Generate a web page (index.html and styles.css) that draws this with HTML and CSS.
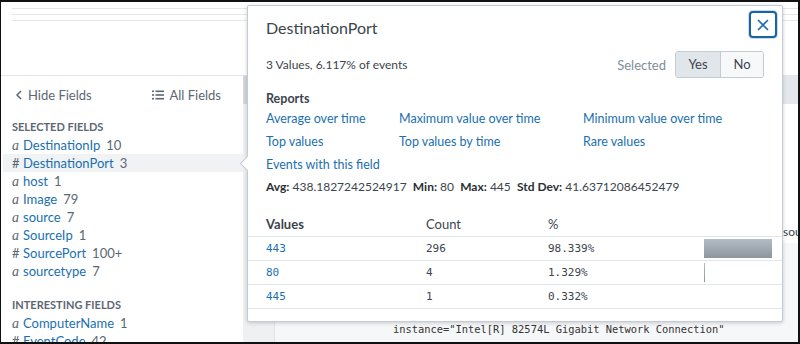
FILE: index.html
```html
<!DOCTYPE html>
<html lang="en">
<head>
    <meta charset="UTF-8">
    <title>Search - Fields</title>
    <link rel="stylesheet" href="styles.css">
</head>
<body>
    <div class="frame">
        <div class="timeline">
            <div class="timeline-line"></div>
            <div class="timeline-line"></div>
            <div class="timeline-line"></div>
        </div>

        <div class="workspace">
            <aside class="sidebar">
                <div class="sidebar-inner">
                    <div class="sidebar-head">
                        <a class="side-link">
                            <svg width="6" height="10" viewBox="0 0 6 10"><polyline points="5,1 1,5 5,9" fill="none" stroke="#5c6773" stroke-width="1.5"/></svg>
                            Hide Fields
                        </a>
                        <a class="side-link">
                            <svg width="12" height="10" viewBox="0 0 12 10">
                                <rect x="0" y="0.5" width="2" height="1.6" fill="#5c6773"/>
                                <rect x="3.5" y="0.5" width="8.5" height="1.6" fill="#5c6773"/>
                                <rect x="0" y="4.2" width="2" height="1.6" fill="#5c6773"/>
                                <rect x="3.5" y="4.2" width="8.5" height="1.6" fill="#5c6773"/>
                                <rect x="0" y="7.9" width="2" height="1.6" fill="#5c6773"/>
                                <rect x="3.5" y="7.9" width="8.5" height="1.6" fill="#5c6773"/>
                            </svg>
                            All Fields
                        </a>
                    </div>

                    <h4 class="field-group">Selected Fields</h4>
                    <ul class="field-list">
                        <li><i class="type">a</i><span class="name">DestinationIp</span><span class="count">10</span></li>
                        <li class="active"><span class="type hash">#</span><span class="name">DestinationPort</span><span class="count">3</span></li>
                        <li><i class="type">a</i><span class="name">host</span><span class="count">1</span></li>
                        <li><i class="type">a</i><span class="name">Image</span><span class="count">79</span></li>
                        <li><i class="type">a</i><span class="name">source</span><span class="count">7</span></li>
                        <li><i class="type">a</i><span class="name">SourceIp</span><span class="count">1</span></li>
                        <li><span class="type hash">#</span><span class="name">SourcePort</span><span class="count">100+</span></li>
                        <li><i class="type">a</i><span class="name">sourcetype</span><span class="count">7</span></li>
                    </ul>

                    <h4 class="field-group interesting">Interesting Fields</h4>
                    <ul class="field-list">
                        <li><i class="type">a</i><span class="name">ComputerName</span><span class="count">1</span></li>
                        <li><span class="type hash">#</span><span class="name">EventCode</span><span class="count">42</span></li>
                    </ul>
                </div>
                <div class="scrollbar"><div class="scroll-thumb"></div></div>
            </aside>

            <main class="events">
                <div class="events-head"></div>
                <div class="event">
                    <div class="event-gutter"></div>
                    <div class="event-body">
                        <div class="event-meta">source = WinEventLog:Microsoft-Windows-Sysmon/Operational</div>
                    </div>
                </div>
                <div class="event alt">
                    <div class="event-gutter"></div>
                    <div class="event-body">
                        <div class="raw">instance="Intel[R] 82574L Gigabit Network Connection"</div>
                    </div>
                </div>
            </main>
        </div>

        <div class="popover">
            <div class="pop-head">
                <h2 class="pop-title">DestinationPort</h2>
                <button class="close-btn" aria-label="Close">
                    <svg width="12" height="12" viewBox="0 0 12 12"><path d="M1 1 L11 11 M11 1 L1 11" stroke="#1a6fb0" stroke-width="1.7" fill="none"/></svg>
                </button>
            </div>

            <div class="pop-summary">
                <span class="summary-text">3 Values, 6.117% of events</span>
                <div class="selected">
                    <span class="selected-label">Selected</span>
                    <div class="toggle">
                        <span class="toggle-btn on">Yes</span>
                        <span class="toggle-btn">No</span>
                    </div>
                </div>
            </div>

            <h3 class="reports-title">Reports</h3>
            <div class="reports">
                <a>Average over time</a>
                <a>Maximum value over time</a>
                <a>Minimum value over time</a>
                <a>Top values</a>
                <a>Top values by time</a>
                <a>Rare values</a>
                <a>Events with this field</a>
            </div>

            <p class="stats">
                <b>Avg:</b> 438.1827242524917 &nbsp;<b>Min:</b> 80 &nbsp;<b>Max:</b> 445 &nbsp;<b>Std Dev:</b> 41.63712086452479
            </p>

            <table class="values">
                <thead>
                    <tr><th class="col-value">Values</th><th class="col-count">Count</th><th class="col-pct">%</th><th></th></tr>
                </thead>
                <tbody>
                    <tr><td class="val">443</td><td>296</td><td>98.339%</td><td><div class="bar" style="width: 68px"></div></td></tr>
                    <tr><td class="val">80</td><td>4</td><td>1.329%</td><td><div class="bar" style="width: 1px"></div></td></tr>
                    <tr><td class="val">445</td><td>1</td><td>0.332%</td><td></td></tr>
                </tbody>
            </table>
        </div>
    </div>
</body>
</html>
```

FILE: styles.css
```css
* {
    margin: 0;
    padding: 0;
    box-sizing: border-box;
}

body {
    font-family: 'Lato', 'Liberation Sans', sans-serif;
    font-size: 13px;
    color: #3c444d;
    background: #111;
}

.frame {
    position: relative;
    width: 800px;
    height: 344px;
    overflow: hidden;
    background: #fff;
    border-top: 2px solid #111;
    border-left: 1px solid #111;
    border-right: 2px solid #111;
    border-bottom: 2px solid #111;
}

/* bande du haut (timeline) */
.timeline {
    height: 73px;
    padding: 1px 0 0 11px;
}

.timeline-line {
    height: 6px;
    border-bottom: 1px solid #e4e7ea;
}

.workspace {
    display: grid;
    grid-template-columns: 246px 1fr;
    height: 267px;
    border-top: 1px solid #e1e6eb;
}

/* sidebar */
.sidebar {
    display: flex;
    overflow: hidden;
}

.sidebar-inner {
    flex: 1;
    padding-left: 2px;
}

.scrollbar {
    width: 4px;
    background: #eef0f2;
}

.scroll-thumb {
    height: 28px;
    background: #d3d8dd;
}

.sidebar-head {
    display: flex;
    justify-content: space-between;
    padding: 10px 22px 0 13px;
    line-height: 18px;
}

.side-link {
    color: #5c6773;
    display: flex;
    align-items: center;
    gap: 6px;
}

.side-link svg {
    flex: none;
}

.sidebar-head .side-link:last-child {
    gap: 5px;
}

.field-group {
    margin-top: 14px;
    padding-left: 9px;
    font-size: 11px;
    line-height: 18px;
    font-weight: 700;
    text-transform: uppercase;
    color: #5c6773;
}

.field-group.interesting {
    margin-top: 16px;
}

.field-list {
    list-style: none;
}

.field-list li {
    display: flex;
    align-items: baseline;
    height: 18px;
    line-height: 18px;
    padding-left: 9px;
    white-space: nowrap;
}

.field-list li.active {
    background: #f0f2f4;
}

.type {
    width: 11px;
    color: #5c6773;
    font-family: 'Liberation Serif', serif;
    font-size: 14px;
}

.type.hash {
    font-family: 'Lato', sans-serif;
    font-size: 13px;
}

.name {
    color: #1a6fb0;
    margin-right: 6px;
}

.count {
    color: #5c6773;
}

/* zone des evenements derriere la popover */
.events {
    background: #fff;
    overflow: hidden;
}

.events-head {
    height: 28px;
    background: #e4e8ec;
}

.event {
    display: flex;
    height: 139px;
}

.event.alt {
    height: 120px;
    background: #f6f7f9;
}

.event-gutter {
    flex: none;
    width: 28px;
    background: #eef0f2;
    border-right: 1px solid #dfe3e7;
}

.event:first-of-type .event-gutter {
    background: #fff;
}

.event-body {
    flex: 1;
    min-width: 0;
    font-family: 'DejaVu Sans Mono', monospace;
    font-size: 10.4px;
    color: #333;
    white-space: nowrap;
}

.event-meta {
    padding: 120px 0 0 508px;
    font-family: 'Lato', sans-serif;
    font-size: 12px;
    color: #3c444d;
}

.alt .event-body {
    padding-top: 77px;
}

.raw {
    line-height: 18px;
    padding-left: 118px;
}

/* popover */
.popover {
    position: absolute;
    top: 3px;
    left: 246px;
    width: 536px;
    height: 317px;
    background: #fff;
    border: 1px solid #c3cbd4;
    border-radius: 2px;
    box-shadow: 0 1px 4px rgba(0, 0, 0, 0.18);
    font-size: 12px;
}

.popover::before {
    content: "";
    position: absolute;
    left: -6px;
    top: 152px;
    width: 10px;
    height: 10px;
    background: #fff;
    border-left: 1px solid #c3cbd4;
    border-bottom: 1px solid #c3cbd4;
    transform: rotate(45deg);
}

.pop-head {
    display: flex;
    justify-content: space-between;
    align-items: flex-start;
    padding: 5px 5px 0 18px;
}

.pop-title {
    margin-top: 7px;
    font-size: 16px;
    line-height: 20px;
    font-weight: 400;
    color: #3c444d;
}

.close-btn {
    width: 28px;
    height: 27px;
    display: flex;
    align-items: center;
    justify-content: center;
    background: #fff;
    border: 2px solid #1a64a0;
    border-radius: 4px;
    box-shadow: 0 0 0 1px rgba(26, 111, 176, 0.25);
}

.pop-summary {
    display: flex;
    justify-content: space-between;
    align-items: center;
    padding: 0 18px;
    margin-top: 13px;
}

.selected {
    display: flex;
    align-items: center;
    gap: 9px;
    font-size: 13px;
}

.selected-label {
    color: #818d99;
}

.toggle {
    display: flex;
    border: 1px solid #c3cbd4;
    border-radius: 3px;
    overflow: hidden;
}

.toggle-btn {
    height: 25px;
    line-height: 25px;
    width: 42px;
    text-align: center;
    background: #f7f8fa;
}

.toggle-btn.on {
    width: 45px;
    background: #e1e6eb;
    border-right: 1px solid #c3cbd4;
}

.reports-title {
    margin-top: 13px;
    padding: 0 18px;
    font-size: 12.5px;
    line-height: 16px;
    font-weight: 700;
}

.reports {
    display: grid;
    grid-template-columns: 133px 184px auto;
    padding: 0 18px;
    line-height: 23px;
    font-size: 12.5px;
}

.reports a {
    color: #1a6fb0;
}

.stats {
    margin-top: 2px;
    padding: 0 18px;
    line-height: 18px;
}

.stats b {
    color: #2b3033;
}

.values {
    width: 100%;
    margin-top: 16px;
    border-collapse: collapse;
    font-size: 13px;
}

.values th,
.values td {
    height: 24px;
    padding: 0 0 0 18px;
    text-align: left;
    vertical-align: middle;
}

.values th {
    font-weight: 400;
}

.values th.col-value {
    font-weight: 700;
    width: 160px;
}

.values th.col-count {
    width: 122px;
}

.values th.col-pct {
    width: 156px;
}

.values tbody tr {
    border-top: 1px solid #e1e6eb;
    border-bottom: 1px solid #e1e6eb;
}

.values td {
    font-family: 'DejaVu Sans Mono', monospace;
    font-size: 11px;
    color: #3c444d;
}

.values td.val {
    color: #1a6fb0;
}

.bar {
    height: 19px;
    background: linear-gradient(to bottom, #b3bbc3, #8d969f);
}
```
